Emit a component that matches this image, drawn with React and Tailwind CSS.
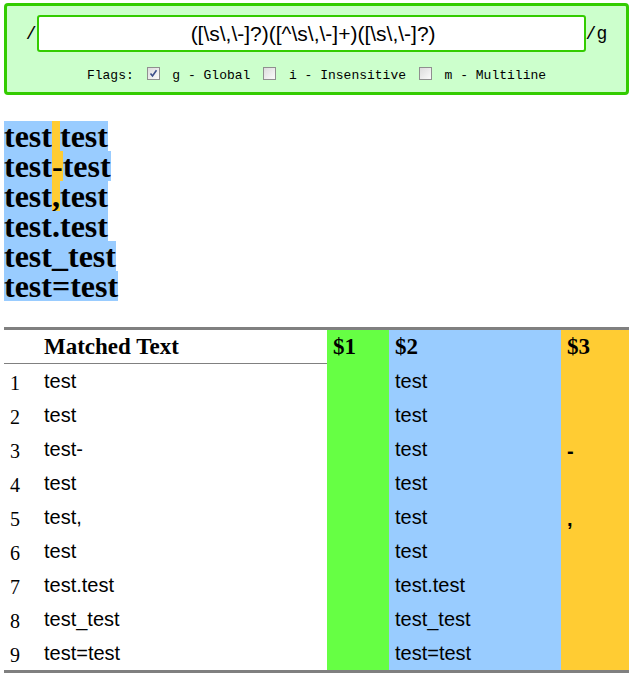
import React from "react";

const serif = "font-['Liberation_Serif',_'Times_New_Roman',serif]";
const sans = "font-['Liberation_Sans',Arial,sans-serif]";
const mono = "font-['Liberation_Mono','Courier_New',monospace]";

function Checkbox({ checked }) {
  return (
    <span className="inline-flex w-[13px] h-[13px] border border-[#8f8f8f] bg-gradient-to-br from-[#dcdcdc] to-[#fbfbfb] items-center justify-center align-middle mx-[5px] relative top-[-2px]">
      {checked && (
        <svg width="9" height="9" viewBox="0 0 9 9">
          <path d="M1.5 4.5 L3.5 7 L7.5 1.2" fill="none" stroke="#3c4f8a" strokeWidth="1.6" />
        </svg>
      )}
    </span>
  );
}

const lines = [
  ["test", " ", "test"],
  ["test", "-", "test"],
  ["test", ",", "test"],
  ["test.test"],
  ["test_test"],
  ["test=test"],
];

const rows = [
  ["1", "test", "", "test", ""],
  ["2", "test", "", "test", ""],
  ["3", "test-", "", "test", "-"],
  ["4", "test", "", "test", ""],
  ["5", "test,", "", "test", ","],
  ["6", "test", "", "test", ""],
  ["7", "test.test", "", "test.test", ""],
  ["8", "test_test", "", "test_test", ""],
  ["9", "test=test", "", "test=test", ""],
];

const cols = "grid grid-cols-[34px_289px_62px_172px_68px]";

export default function App() {
  return (
    <div className="bg-white min-h-[681px] pl-[4px] pr-[8px] pt-[3px] text-black">
      {/* pattern editor */}
      <div className="border-[3px] border-[#33cc00] rounded-[4px] bg-[#ccffcc] h-[92px] pt-[9px]">
        <div className="flex justify-center items-center">
          <span className={`${mono} text-[18px] leading-none`}>/</span>
          <div className="w-[549px] h-[37px] border-2 border-[#33cc00] rounded-[3px] bg-white flex items-center justify-center">
            <span className={`${sans} text-[21px] leading-none pl-[4px]`}>{"([\\s\\,\\-]?)([^\\s\\,\\-]+)([\\s\\,\\-]?)"}</span>
          </div>
          <span className={`${mono} text-[18px] leading-none`}>/g</span>
        </div>
        <div className={`${mono} text-[13px] leading-none mt-[17px] text-center whitespace-pre`}>
          {"Flags: "}
          <Checkbox checked />
          {" g - Global "}
          <Checkbox />
          {" i - Insensitive "}
          <Checkbox />
          {" m - Multiline"}
        </div>
      </div>

      {/* highlighted subject text */}
      <div className={`${serif} font-bold text-[32px] leading-[30px] mt-[26px] whitespace-pre`}>
        {lines.map((parts, i) => (
          <div key={i} className="flex w-fit h-[30px]">
            {parts.map((p, j) => (
              <span key={j} className={j === 1 ? "bg-[#ffcc33]" : "bg-[#99ccff]"}>
                {p}
              </span>
            ))}
          </div>
        ))}
      </div>

      {/* match table */}
      <div className="mt-[26px] border-t-[3px] border-b-[3px] border-[#808080]">
        <div className={`${cols} h-[34px] border-b border-[#808080] ${serif} font-bold text-[23px]`}>
          <div />
          <div className="pl-[6px] flex items-center">Matched Text</div>
          <div className="pl-[6px] flex items-center bg-[#66ff44]">$1</div>
          <div className="pl-[6px] flex items-center bg-[#99ccff]">$2</div>
          <div className="pl-[6px] flex items-center bg-[#ffcc33]">$3</div>
        </div>
        {rows.map((r) => (
          <div key={r[0]} className={`${cols} h-[34px]`}>
            <div className={`pl-[6px] flex items-center pt-[3px] ${serif} text-[20px]`}>{r[0]}</div>
            <div className={`pl-[6px] flex items-center ${sans} text-[20px]`}>{r[1]}</div>
            <div className={`pl-[6px] flex items-center bg-[#66ff44] ${sans} text-[20px]`}>{r[2]}</div>
            <div className={`pl-[6px] flex items-center bg-[#99ccff] ${sans} text-[20px]`}>{r[3]}</div>
            <div className={`pl-[6px] flex items-center pt-[4px] bg-[#ffcc33] ${sans} font-bold text-[20px]`}>{r[4]}</div>
          </div>
        ))}
      </div>
    </div>
  );
}
